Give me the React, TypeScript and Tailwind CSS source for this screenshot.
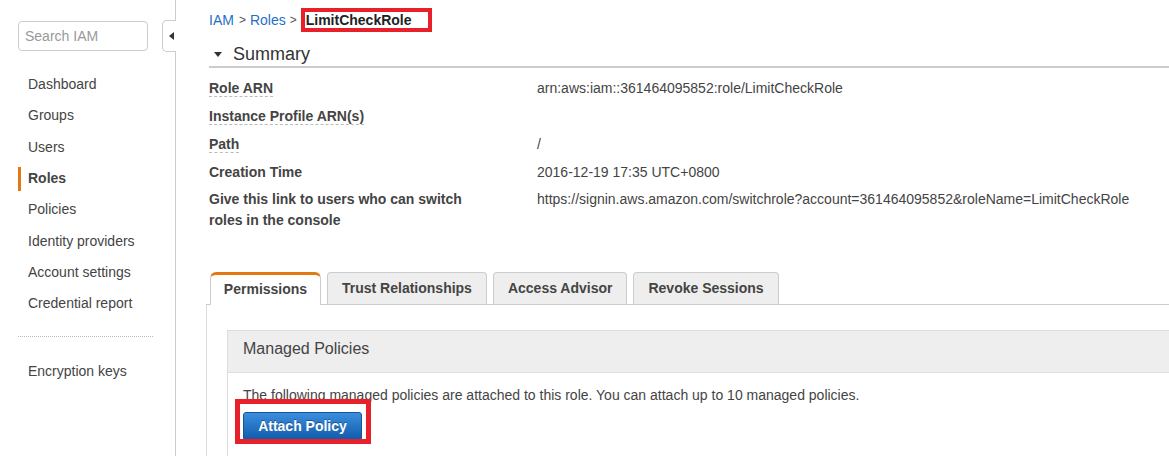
const navItems = [
  "Dashboard",
  "Groups",
  "Users",
  "Roles",
  "Policies",
  "Identity providers",
  "Account settings",
  "Credential report",
];

const summaryRows: { label: string; value: string; dotted?: boolean }[] = [
  { label: "Role ARN", value: "arn:aws:iam::361464095852:role/LimitCheckRole", dotted: true },
  { label: "Instance Profile ARN(s)", value: "", dotted: true },
  { label: "Path", value: "/", dotted: true },
  { label: "Creation Time", value: "2016-12-19 17:35 UTC+0800" },
];

const tabs = ["Permissions", "Trust Relationships", "Access Advisor", "Revoke Sessions"];

function Sidebar() {
  return (
    <aside className="relative w-[176px] shrink-0 border-r border-[#cccccc] pt-[21px]">
      <div className="ml-[18px] flex h-[30px] w-[130px] items-center rounded-[4px] border border-[#cccccc] px-[6px] text-[14px] text-[#999999]">
        Search IAM
      </div>

      {/* collapse handle */}
      <div className="absolute right-[-1px] top-[20px] flex h-[32px] w-[14px] items-center justify-center rounded-l-[5px] border border-r-0 border-[#cccccc] bg-white">
        <span className="ml-[3px] h-0 w-0 border-y-[4px] border-r-[5px] border-y-transparent border-r-[#333333]" />
      </div>

      <nav className="mt-[18px] flex flex-col">
        {navItems.map((item) => (
          <div key={item} className="relative flex h-[31.3px] items-center pl-[28px] text-[14px] text-[#444444]">
            {item === "Roles" && (
              <span className="absolute left-[18px] top-[4px] h-[24px] w-[3px] bg-[#e47911]" />
            )}
            <span className={item === "Roles" ? "font-bold" : ""}>{item}</span>
          </div>
        ))}
      </nav>

      <div className="mx-[18px] mt-[17px] w-[135px] border-t border-dotted border-[#bbbbbb]" />

      <div className="mt-[19px] flex h-[31px] items-center pl-[28px] text-[14px] text-[#444444]">
        Encryption keys
      </div>
    </aside>
  );
}

function Summary() {
  return (
    <>
      <div className="flex h-[24px] items-center text-[14px]">
        <span className="text-[#1f6fc5]">IAM</span>
        <span className="ml-[5px] mr-[4px] text-[12px] text-[#555555]">&gt;</span>
        <span className="text-[#1f6fc5]">Roles</span>
        <span className="mx-[4px] text-[12px] text-[#555555]">&gt;</span>
        <span className="box-border flex h-[24px] w-[131px] items-center border-4 border-[#e8202a] pl-[1px] font-bold text-[#222222]">
          LimitCheckRole
        </span>
      </div>

      <div className="flex items-center border-b-2 border-[#cccccc] pb-[1px] pt-[11px] leading-[22px]">
        <span className="ml-[5px] mr-[11px] h-0 w-0 border-x-[4px] border-t-[5px] border-x-transparent border-t-[#333333]" />
        <span className="text-[18px] text-[#333333]">Summary</span>
      </div>

      <div className="mt-[6px] flex flex-col text-[14px] text-[#444444]">
        {summaryRows.map((row) => (
          <div key={row.label} className="flex h-[28px] items-center">
            <div className="w-[328px] shrink-0 font-bold">
              <span className={row.dotted ? "border-b border-dashed border-[#bbbbbb]" : ""}>{row.label}</span>
            </div>
            <div>{row.value}</div>
          </div>
        ))}
        <div className="flex pt-[3px] leading-[21px]">
          <div className="w-[328px] shrink-0 pr-[50px] font-bold">
            Give this link to users who can switch roles in the console
          </div>
          <div>https://signin.aws.amazon.com/switchrole?account=361464095852&amp;roleName=LimitCheckRole</div>
        </div>
      </div>
    </>
  );
}

function Permissions() {
  return (
    <div className="ml-[-3px] mt-[41px] mr-[-40px]">
      <div className="flex h-[33px] items-end gap-[6px] border-b border-[#cccccc] pl-[4px]">
        {tabs.map((tab, i) =>
          i === 0 ? (
            <div
              key={tab}
              className="mb-[-1px] flex h-[33px] w-[111px] items-center justify-center rounded-t-[6px] border-x border-t-[3px] border-[#cccccc] border-t-[#e47911] bg-white pb-[1px] text-[14px] font-bold text-[#444444]"
            >
              {tab}
            </div>
          ) : (
            <div
              key={tab}
              className="flex h-[32px] items-center rounded-t-[4px] border-x border-t border-[#cccccc] bg-[#eeeeee] px-[14px] text-[14px] font-bold text-[#444444]"
            >
              {tab}
            </div>
          )
        )}
      </div>

      <div className="h-[200px] border-l border-[#dddddd] pl-[20px] pt-[25px]">
        <div className="border border-[#dddddd]">
          <div className="flex h-[41px] items-center bg-[#eeeeee] pb-[5px] pl-[15px] text-[16px] text-[#444444]">
            Managed Policies
          </div>
          <div className="border-t border-[#dddddd] pl-[15px] pt-[12px] pb-[20px]">
            <p className="text-[14px] leading-[20px] text-[#444444]">
              The following managed policies are attached to this role. You can attach up to 10 managed policies.
            </p>
            <div className="relative mt-[7px] inline-block">
              <button
                type="button"
                className="flex h-[29px] w-[119px] items-center justify-center rounded-[3px] border border-[#15539a] bg-gradient-to-b from-[#3b8fde] to-[#0f5aab] text-[14px] font-bold text-white [text-shadow:0_-1px_0_rgba(0,0,0,0.35)]"
              >
                Attach Policy
              </button>
              <span className="pointer-events-none absolute left-[-8px] top-[-13px] h-[45px] w-[136px] border-[5px] border-[#e8202a]" />
            </div>
          </div>
        </div>
      </div>
    </div>
  );
}

export default function App() {
  return (
    <div className="flex h-[456px] w-[1169px] overflow-hidden bg-white font-['Liberation_Sans',Arial,sans-serif]">
      <Sidebar />
      <main className="min-w-0 flex-1 pl-[33px] pt-[8px]">
        <Summary />
        <Permissions />
      </main>
    </div>
  );
}
